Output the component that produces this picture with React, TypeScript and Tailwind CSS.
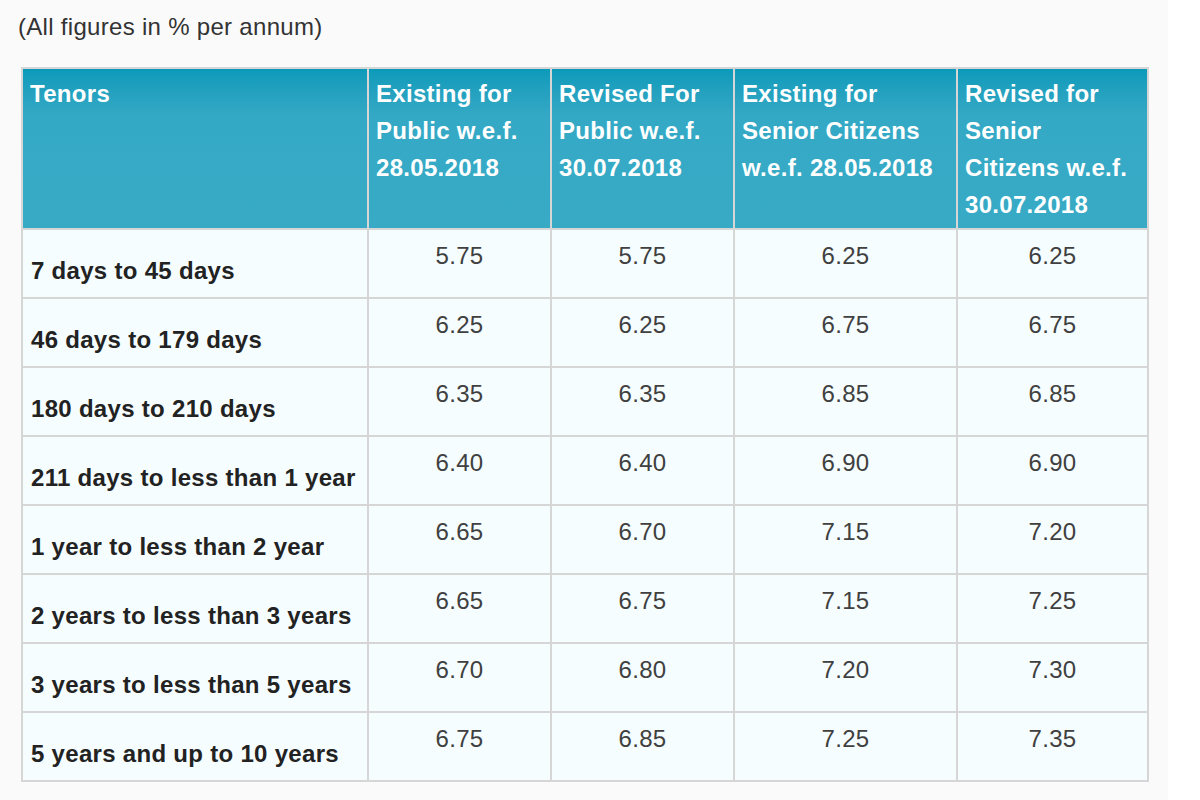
import React from "react";

const rows = [
  ["7 days to 45 days", "5.75", "5.75", "6.25", "6.25"],
  ["46 days to 179 days", "6.25", "6.25", "6.75", "6.75"],
  ["180 days to 210 days", "6.35", "6.35", "6.85", "6.85"],
  ["211 days to less than 1 year", "6.40", "6.40", "6.90", "6.90"],
  ["1 year to less than 2 year", "6.65", "6.70", "7.15", "7.20"],
  ["2 years to less than 3 years", "6.65", "6.75", "7.15", "7.25"],
  ["3 years to less than 5 years", "6.70", "6.80", "7.20", "7.30"],
  ["5 years and up to 10 years", "6.75", "6.85", "7.25", "7.35"],
];

const headers = [
  ["Tenors"],
  ["Existing for", "Public w.e.f.", "28.05.2018"],
  ["Revised For", "Public w.e.f.", "30.07.2018"],
  ["Existing for", "Senior Citizens", "w.e.f. 28.05.2018"],
  ["Revised for", "Senior", "Citizens w.e.f.", "30.07.2018"],
];

const App = () => {
  return (
    <div className="min-h-[800px] w-full bg-white font-['Liberation_Sans',Arial,sans-serif] tracking-[0.3px]">
      <div className="min-h-[800px] w-[1168px] bg-[#fafafa] pl-[21px] pt-[12px]">
        <p className="ml-[-3px] text-[24px] leading-[30px] text-[#333]">
          (All figures in % per annum)
        </p>
        <div className="mt-[25px] grid w-[1128px] grid-cols-[344px_181px_181px_221px_189px] gap-[2px] bg-[#d6d6d6] p-[2px]">
          {headers.map((lines, i) => (
            <div
              key={i}
              className="h-[159px] bg-gradient-to-b from-[#0a9aba] via-[#34a9c5] via-30% to-[#38aac6] pl-[7px] pt-[6px] text-[24px] font-bold leading-[37px] text-white"
            >
              {lines.map((l, j) => (
                <div key={j} className="whitespace-nowrap">
                  {l}
                </div>
              ))}
            </div>
          ))}
          {rows.map((r, i) => (
            <React.Fragment key={i}>
              <div className="h-[67px] bg-[#f5fdff] pl-[8px] pt-[22px] text-[24px] font-bold leading-[37px] text-[#222]">
                {r[0]}
              </div>
              {r.slice(1).map((v, j) => (
                <div
                  key={j}
                  className="h-[67px] bg-[#f5fdff] pt-[7px] text-center text-[24px] leading-[37px] text-[#404040]"
                >
                  {v}
                </div>
              ))}
            </React.Fragment>
          ))}
        </div>
      </div>
    </div>
  );
};

export default App;
